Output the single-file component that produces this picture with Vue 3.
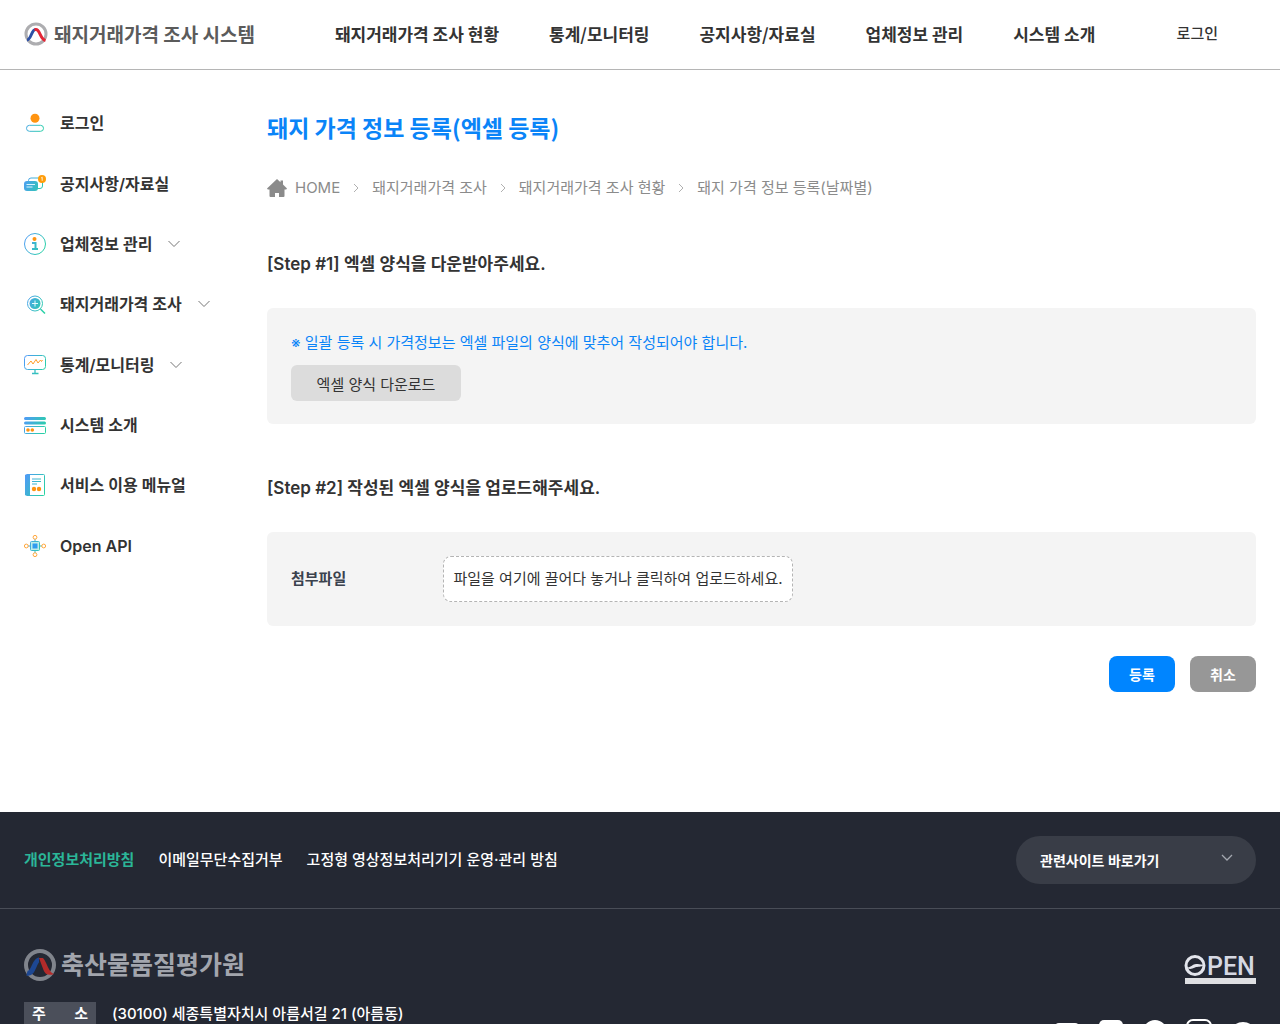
<script setup>
const menu = ['돼지거래가격 조사 현황', '통계/모니터링', '공지사항/자료실', '업체정보 관리', '시스템 소개']

const side = [
  { icon: 'user', label: '로그인' },
  { icon: 'notice', label: '공지사항/자료실' },
  { icon: 'info', label: '업체정보 관리', open: true },
  { icon: 'search', label: '돼지거래가격 조사', open: true },
  { icon: 'chart', label: '통계/모니터링', open: true },
  { icon: 'system', label: '시스템 소개' },
  { icon: 'manual', label: '서비스 이용 메뉴얼' },
  { icon: 'api', label: 'Open API' }
]

const crumbs = ['돼지거래가격 조사', '돼지거래가격 조사 현황', '돼지 가격 정보 등록(날짜별)']
</script>

<template>
  <div class="page">
    <header class="header">
      <a href="#" class="logo">
        <svg width="24" height="24" viewBox="0 0 24 24" fill="none">
          <defs>
            <linearGradient id="mint" gradientUnits="userSpaceOnUse" x1="0" y1="6" x2="22" y2="16">
              <stop offset="0" stop-color="#4f9cf5" />
              <stop offset="1" stop-color="#27d3a2" />
            </linearGradient>
          </defs>
          <circle cx="12" cy="12" r="10" stroke="#adadb0" stroke-width="3" />
          <path d="M3 18C7 18 7.500 7.500 11.500 7.500" stroke="#2d50a5" stroke-width="3" />
          <path d="M10.500 7.500H12C16 7.500 16 17 21.500 18.500" stroke="#e32636" stroke-width="3" />
        </svg>
        <span>돼지거래가격 조사 시스템</span>
      </a>
      <nav class="menu">
        <a v-for="m in menu" :key="m" href="#">{{ m }}</a>
      </nav>
      <a href="#" class="login">로그인</a>
    </header>

    <div class="body">
      <aside class="side">
        <ul>
          <li v-for="s in side" :key="s.label">
            <a href="#">
              <svg class="icon" width="22" height="22" viewBox="0 0 22 22" fill="none">
                <g v-if="s.icon === 'user'">
                  <circle cx="11" cy="6.300" r="4.500" fill="#ff9411" />
                  <rect x="2.500" y="13.300" width="17" height="6" rx="3" stroke="url(#mint)" />
                </g>
                <g v-else-if="s.icon === 'notice'">
                  <path d="M4.500 9V7.500a2.500 2.500 0 0 1 2.500-2.500h8M18.500 8v5a2.500 2.500 0 0 1-2.500 2.500h-3" stroke="url(#mint)" />
                  <rect y="8" width="14" height="10" rx="3" fill="url(#mint)" />
                  <path d="M2.500 11.500h8.500M2.500 14h6" stroke="#d9f3ff" />
                  <circle cx="18" cy="6" r="4" fill="#ff9d0a" />
                  <path d="M17.200 5l1-.8v3.600" stroke="#fff" stroke-width=".8" />
                </g>
                <g v-else-if="s.icon === 'info'">
                  <circle cx="11" cy="11" r="10.500" stroke="url(#mint)" />
                  <circle cx="10.500" cy="6" r="2" fill="#ff9411" />
                  <path d="M8 10h3.500v6M8 16h6" stroke="url(#mint)" stroke-width="2" />
                </g>
                <g v-else-if="s.icon === 'search'">
                  <circle cx="11" cy="10.500" r="7.500" stroke="url(#mint)" />
                  <circle cx="11" cy="10.500" r="5.500" fill="url(#mint)" />
                  <path d="M11 7.500v6M8 10.500h6" stroke="#e7fbff" />
                  <path d="M16.500 16l4.500 4.500" stroke="url(#mint)" stroke-width="1.500" />
                </g>
                <g v-else-if="s.icon === 'chart'">
                  <rect x=".5" y="1.500" width="21" height="14" rx="3" stroke="url(#mint)" />
                  <path d="M11 15.500V19M8 19.500h6.500" stroke="url(#mint)" stroke-width="1.300" />
                  <path d="M3.500 11l3.500-4 2 3 3-4.500 2 3.500 2.500-3 1 1.500 1-1.500" stroke="#ff9d2a" />
                </g>
                <g v-else-if="s.icon === 'system'">
                  <path d="M1.500 4.500h19M1.500 9h19" stroke="url(#mint)" stroke-width="3" stroke-linecap="round" />
                  <rect x=".5" y="12.500" width="21" height="7" rx="1" stroke="url(#mint)" />
                  <circle cx="4" cy="16" r="1.800" fill="#ff9411" />
                  <circle cx="8.300" cy="16" r="1.800" fill="#ff9411" />
                </g>
                <g v-else-if="s.icon === 'manual'">
                  <rect x="1.500" y=".5" width="19" height="21" rx="1" stroke="url(#mint)" />
                  <path d="M1 1h5v20H1z" fill="url(#mint)" />
                  <path d="M8 5h9M8 7.500h9M8 10h5" stroke="url(#mint)" />
                  <circle cx="10" cy="15" r="2.200" fill="#ff9411" />
                  <circle cx="15" cy="15" r="2.200" fill="#ff9411" />
                </g>
                <g v-else>
                  <path d="M11 4v14M4 11h14" stroke="url(#mint)" />
                  <rect x="6.500" y="6.500" width="9" height="9" rx="1" fill="#bfeee8" stroke="url(#mint)" />
                  <rect x="8.500" y="8.500" width="5" height="5" fill="#319bf0" />
                  <g stroke="#ffa63a" fill="#fff">
                    <circle cx="11" cy="2.300" r="1.900" />
                    <circle cx="11" cy="19.700" r="1.900" />
                    <circle cx="2.300" cy="11" r="1.900" />
                    <circle cx="19.700" cy="11" r="1.900" />
                  </g>
                </g>
              </svg>
              <span>{{ s.label }}</span>
              <svg v-if="s.open" class="chevron" width="12" height="8" viewBox="0 0 12 8" fill="none">
                <path d="M.5 1L6 6.500 11.500 1" stroke="#777" />
              </svg>
            </a>
          </li>
        </ul>
      </aside>

      <main class="main">
        <h1>돼지 가격 정보 등록(엑셀 등록)</h1>
        <nav class="crumbs">
          <a href="#" class="home">
            <svg width="20" height="20" viewBox="0 0 20 20">
              <path d="M10 1l3.500 3.200V2.500H16v4l4 4.100-.8 1H17.500V18a1 1 0 0 1-1 1H12v-4H8v4H3.500a1 1 0 0 1-1-1v-6.400H.8L0 10.600z" fill="#8b8b8b" />
            </svg>
            HOME
          </a>
          <template v-for="c in crumbs" :key="c">
            <svg width="4" height="10" viewBox="0 0 4 10" fill="none" overflow="visible">
              <path d="M0 1l4 4-4 4" stroke="#b0b0b0" />
            </svg>
            <a href="#">{{ c }}</a>
          </template>
        </nav>

        <h2>[Step #1] 엑셀 양식을 다운받아주세요.</h2>
        <section class="box">
          <p class="note">※ 일괄 등록 시 가격정보는 엑셀 파일의 양식에 맞추어 작성되어야 합니다.</p>
          <button type="button" class="download">엑셀 양식 다운로드</button>
        </section>

        <h2>[Step #2] 작성된 엑셀 양식을 업로드해주세요.</h2>
        <section class="box upload">
          <label for="attachment" class="field">첨부파일</label>
          <label class="drop">
            파일을 여기에 끌어다 놓거나 클릭하여 업로드하세요.
            <input id="attachment" type="file" />
          </label>
        </section>

        <div class="actions">
          <button type="submit" class="save">등록</button>
          <button type="button" class="cancel">취소</button>
        </div>
      </main>
    </div>

    <footer class="footer">
      <div class="policy">
        <nav>
          <a href="#" class="privacy">개인정보처리방침</a>
          <a href="#">이메일무단수집거부</a>
          <a href="#">고정형 영상정보처리기기 운영·관리 방침</a>
        </nav>
        <div class="related">
          <select aria-label="관련사이트 바로가기">
            <option>관련사이트 바로가기</option>
          </select>
          <svg width="12" height="8" viewBox="0 0 12 8" fill="none">
            <path d="M1 1l5 5 5-5" stroke="#a3a7af" stroke-width="1.300" />
          </svg>
        </div>
      </div>
      <div class="about">
        <div>
          <div class="agency">
            <svg width="32" height="32" viewBox="0 0 32 32" fill="none">
              <circle cx="16" cy="16" r="14" stroke="#80848c" stroke-width="4" />
              <path d="M3 24C10 26 10 11 15 11" stroke="#1d4792" stroke-width="5" />
              <path d="M15 9h4c4 4 5 14 11 16-5 2-9 .5-10.500-4z" fill="#b32b2a" />
            </svg>
            <span>축산물품질평가원</span>
          </div>
          <address>
            <span class="tag"><b>주</b><b>소</b></span>
            <span>(30100) 세종특별자치시 아름서길 21 (아름동)</span>
          </address>
        </div>
        <div class="marks">
          <svg width="72" height="36" viewBox="0 -4 72 36" fill="none" role="img" aria-label="OPEN">
            <circle cx="11" cy="12.500" r="9" stroke="#e3e5ec" stroke-width="3" />
            <path d="M1 13.500c5 3 7-2.500 11-2.500 3 0 5 1 9 .5-5 3.500-7 1.500-10 3-4 2-7 2-10-1z" fill="#e3e5ec" />
            <text x="23" y="22" class="pen">PEN</text>
            <path d="M1 25h71v6H1z" fill="#dedfe2" />
          </svg>
          <div class="social">
            <a href="#" aria-label="YouTube">
              <svg width="26" height="26" viewBox="0 0 26 26"><path d="M5 4h16q4 0 4 4v10q0 4-4 4H5q-4 0-4-4V8q0-4 4-4zm6 5v8l6-4z" fill="#fff" /></svg>
            </a>
            <a href="#" aria-label="Blog">
              <svg width="26" height="26" viewBox="0 0 26 26"><rect x="1" y="1" width="24" height="20" rx="5" fill="#fff" /><path d="M9 21h8l-4 4z" fill="#fff" /></svg>
            </a>
            <a href="#" aria-label="Facebook">
              <svg width="26" height="26" viewBox="0 0 26 26"><circle cx="13" cy="13" r="12" fill="#fff" /><path d="M12 24v-9H9v-3h3c0-4 1-6 5-5v3c-2 0-2 0-2 2h2v3h-2v9z" fill="#242833" /></svg>
            </a>
            <a href="#" aria-label="Instagram">
              <svg width="26" height="26" viewBox="0 0 26 26" fill="none" stroke="#fff" stroke-width="2"><rect x="1" y="1" width="24" height="24" rx="6" /><circle cx="13" cy="13" r="6" /></svg>
            </a>
            <a href="#" aria-label="KakaoTalk">
              <svg width="26" height="26" viewBox="0 0 26 26"><ellipse cx="13" cy="13" rx="12" ry="10" fill="#fff" /></svg>
            </a>
          </div>
        </div>
      </div>
    </footer>
  </div>
</template>

<style>
body {
  margin: 0;
}
</style>

<style scoped>
.page {
  height: 100vh;
  overflow: hidden;
  background: #fff;
  color: #333;
  font-family: Inter, "Noto Sans CJK KR", sans-serif;
  font-size: 15px;
  line-height: 24px;
  white-space: nowrap;
}
* {
  box-sizing: border-box;
}
a {
  color: inherit;
  text-decoration: none;
}
svg {
  display: block;
  flex: none;
}
button,
select {
  border: 0;
  font-family: inherit;
  cursor: pointer;
}
.header {
  display: flex;
  align-items: center;
  height: 70px;
  padding: 0 62px 2px 24px;
  border-bottom: 1px solid #b5b5b5;
}
.logo {
  display: flex;
  align-items: center;
  gap: 6px;
  color: #5b5b5b;
  font-family: "Noto Sans CJK KR", sans-serif;
  font-size: 19px;
  font-weight: 700;
}
.menu {
  display: flex;
  gap: 50px;
  margin-left: 80px;
  font-family: "Noto Sans CJK KR", sans-serif;
  font-size: 17px;
  font-weight: 600;
}
.login {
  margin-left: auto;
  font-weight: 500;
}
.body {
  display: flex;
  padding: 0 24px;
}
.side {
  flex: none;
  width: 243px;
  padding-top: 23px;
}
.side ul {
  display: grid;
  grid-auto-rows: 1fr;
  height: 483px;
  margin: 0;
  padding: 0;
  list-style: none;
}
.side li,
.side a {
  display: flex;
  align-items: center;
}
.side a {
  font-size: 16px;
  font-weight: 600;
}
.icon {
  margin-right: 14px;
}
.chevron {
  margin-left: 16px;
}
.main {
  flex: 1;
  min-width: 0;
  padding: 41px 0 120px;
}
h1 {
  margin: 0 0 33px;
  color: #0a84f8;
  font-family: "Noto Sans CJK KR", sans-serif;
  font-size: 23px;
  font-weight: 700;
  line-height: 32px;
}
.crumbs {
  display: flex;
  align-items: center;
  gap: 14px;
  color: #8b8b8b;
}
.home {
  display: flex;
  align-items: center;
  gap: 8px;
}
h2 {
  margin: 52px 0 32px;
  font-size: 17px;
  font-weight: 600;
  line-height: 24px;
}
.box {
  padding: 23px 24px;
  border-radius: 6px;
  background: #f4f4f4;
}
.note {
  margin: 0 0 10px;
  color: #0a84f8;
}
.download {
  display: block;
  width: 170px;
  height: 36px;
  border-radius: 6px;
  background: #dcdcdc;
  color: #333;
  font-size: 15px;
}
.upload {
  display: flex;
  align-items: center;
  padding: 24px;
}
.field {
  width: 152px;
  color: #3b424e;
  font-weight: 600;
}
.drop {
  position: relative;
  width: 350px;
  padding: 10px 0;
  border: 1px dashed #b4b4b4;
  border-radius: 8px;
  background: #fff;
  text-align: center;
  cursor: pointer;
}
.drop input {
  position: absolute;
  inset: 0;
  width: 100%;
  opacity: 0;
}
.actions {
  display: flex;
  justify-content: flex-end;
  gap: 15px;
  margin-top: 30px;
}
.actions button {
  width: 66px;
  height: 36px;
  border-radius: 8px;
  color: #fff;
  font-size: 14px;
  font-weight: 600;
}
.actions .save {
  background: #0085ff;
}
.actions .cancel {
  background: #979797;
}
.footer {
  background: #242833;
  color: #fff;
  font-weight: 500;
}
.policy {
  display: flex;
  align-items: center;
  justify-content: space-between;
  height: 97px;
  padding: 0 24px;
  border-bottom: 1px solid #494d57;
}
.policy nav {
  display: flex;
  gap: 24px;
}
.privacy {
  color: #2bb698;
  font-weight: 700;
}
.related {
  position: relative;
}
.related select {
  display: block;
  width: 240px;
  height: 48px;
  padding: 0 24px;
  border-radius: 24px;
  background: #393d47;
  color: #fff;
  font-size: 14px;
  font-weight: 600;
  appearance: none;
}
.related svg {
  position: absolute;
  top: 18px;
  right: 23px;
  pointer-events: none;
}
.about {
  display: flex;
  justify-content: space-between;
  padding: 40px 24px;
}
.agency {
  display: flex;
  align-items: center;
  gap: 5px;
  height: 32px;
  color: #a2a5ad;
  font-size: 25px;
  font-weight: 700;
}
address {
  display: flex;
  gap: 16px;
  margin-top: 21px;
  font-style: normal;
}
.tag {
  display: flex;
  justify-content: space-between;
  width: 72px;
  padding: 0 8px;
  background: #4b4f5a;
}
.marks {
  display: flex;
  flex-direction: column;
  align-items: flex-end;
  gap: 34px;
}
.pen {
  fill: #d5d8e3;
  font-family: Roboto, sans-serif;
  font-size: 25px;
  font-weight: 500;
}
.social {
  display: flex;
  gap: 18px;
}
</style>
